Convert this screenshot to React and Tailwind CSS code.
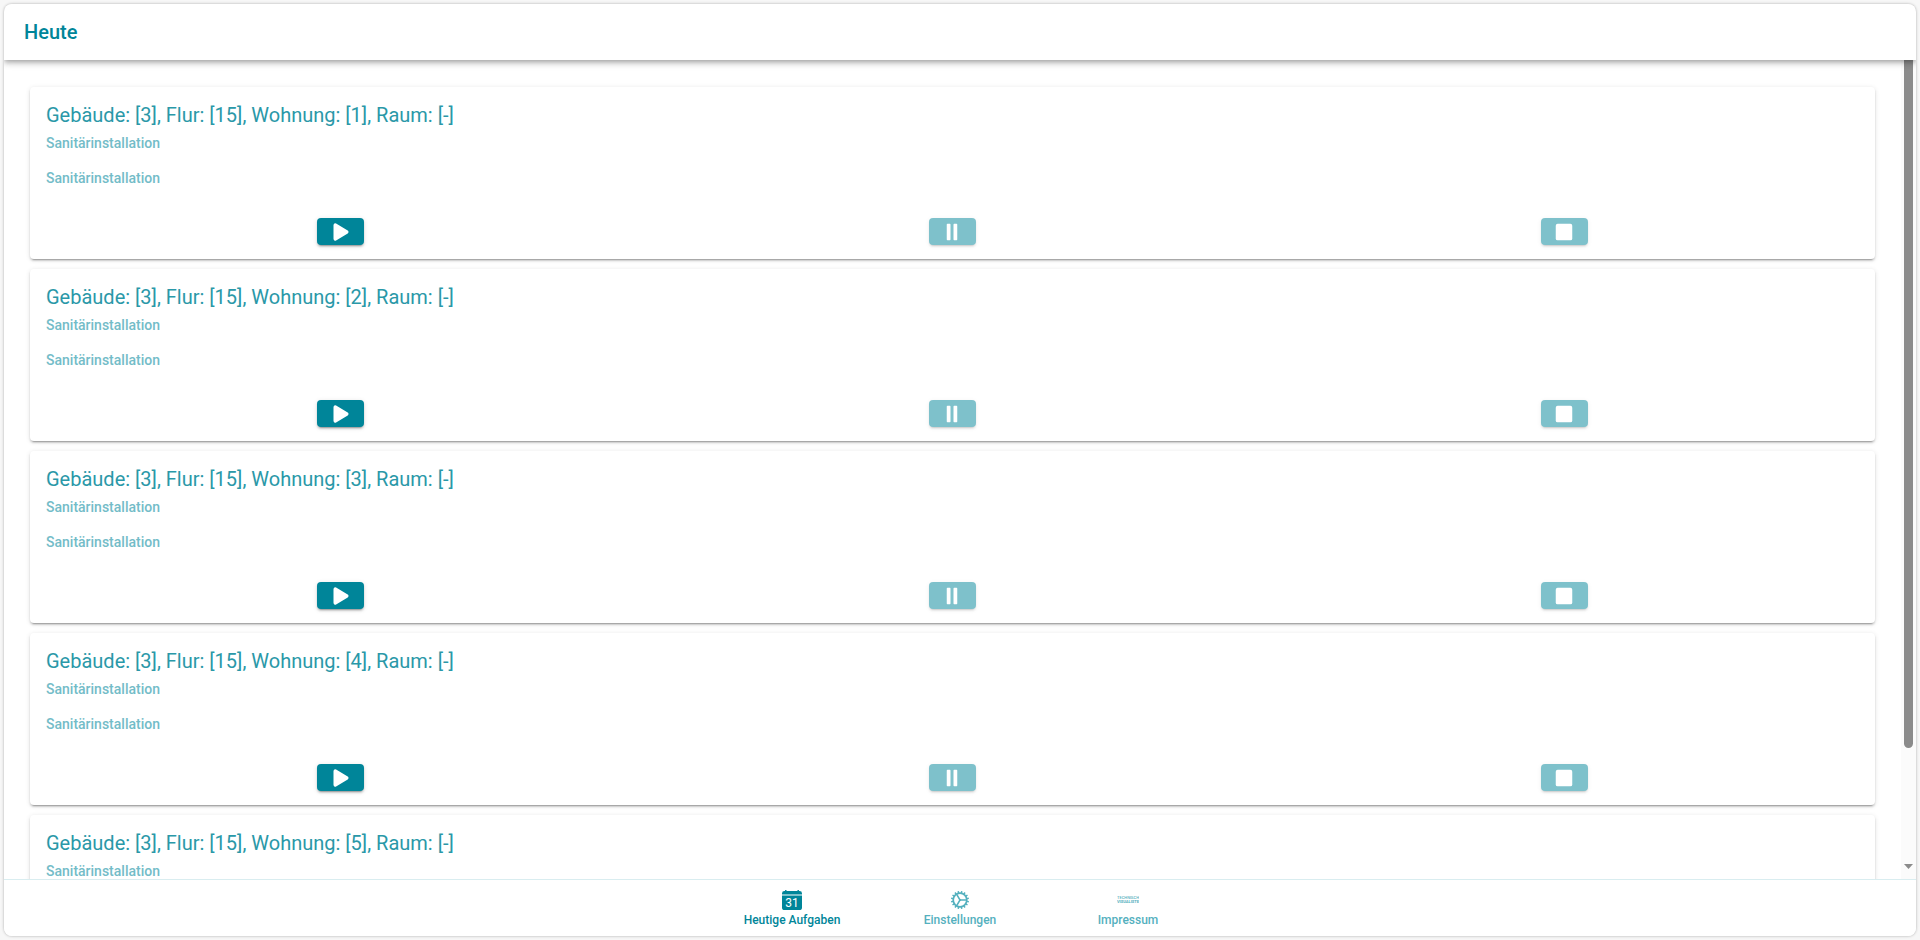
import React from "react";
import { IoPause, IoPlay, IoStop } from "react-icons/io5";

const tasks = [1, 2, 3, 4, 5].map((apartment) => ({
  id: apartment,
  title: `Gebäude: [3], Flur: [15], Wohnung: [${apartment}], Raum: [-]`,
  trade: "Sanitärinstallation",
  description: "Sanitärinstallation",
}));

function ActionButton({ label, icon: Icon, disabled }) {
  return (
    <div className="flex justify-center">
      <button
        type="button"
        aria-label={label}
        disabled={disabled}
        className="flex h-[27px] w-[47px] items-center justify-center rounded bg-[#008599] text-white shadow-[0_3px_1px_-2px_rgba(0,0,0,0.2),0_2px_2px_0_rgba(0,0,0,0.14),0_1px_5px_0_rgba(0,0,0,0.12)] disabled:opacity-50"
      >
        <Icon className="size-6" />
      </button>
    </div>
  );
}

function TaskCard({ task }) {
  return (
    <article className="shrink-0 rounded bg-white shadow-[0_3px_1px_-2px_rgba(0,0,0,0.2),0_2px_2px_0_rgba(0,0,0,0.14),0_1px_5px_0_rgba(0,0,0,0.12)]">
      <div className="px-4 pt-4">
        <h2 className="text-xl leading-6 text-[#2a98a8]">{task.title}</h2>
        <h3 className="mt-2 text-sm leading-[17px] font-medium text-[#73bcc8]">{task.trade}</h3>
        <p className="mt-4 text-sm leading-5 font-medium text-[#73bcc8]">{task.description}</p>
      </div>
      <div className="mt-[30px] grid grid-cols-3 px-[5px] pb-3.5">
        <ActionButton label="Start" icon={IoPlay} />
        <ActionButton label="Pause" icon={IoPause} disabled />
        <ActionButton label="Stopp" icon={IoStop} disabled />
      </div>
    </article>
  );
}

function CalendarIcon() {
  return (
    <svg viewBox="0 0 20 20" className="size-5" aria-hidden="true">
      <path
        fill="currentColor"
        d="M0 4.6V3.4A2.4 2.4 0 0 1 2.4 1H3V.4a.4.4 0 0 1 .4-.4h.8a.4.4 0 0 1 .4.4V1h10.8V.4a.4.4 0 0 1 .4-.4h.8a.4.4 0 0 1 .4.4V1h.6A2.4 2.4 0 0 1 20 3.4v1.2z"
      />
      <path fill="currentColor" d="M0 5.6h20v11.8a2.6 2.6 0 0 1-2.6 2.6H2.6A2.6 2.6 0 0 1 0 17.400z" />
      <text x="10" y="16.6" textAnchor="middle" fontSize="12" fontWeight="400" fill="#fff">
        31
      </text>
    </svg>
  );
}

const teeth = Array.from({ length: 16 }, (_, i) => i * 22.5 + 11.25);

function GearIcon() {
  return (
    <svg viewBox="0 0 20 20" className="size-5" fill="none" stroke="currentColor" aria-hidden="true">
      <circle cx="10" cy="10" r="6.8" strokeWidth="1.7" />
      {teeth.map((angle) => (
        <path key={angle} d="M10 3V1" strokeWidth="1.5" transform={`rotate(${angle} 10 10)`} />
      ))}
      <path d="M10 10h6.500M10 10L6.700 4.300M10 10L6.700 15.700" strokeWidth="1.5" />
      <circle cx="10" cy="10" r="1" fill="currentColor" stroke="none" />
    </svg>
  );
}

function ImprintIcon() {
  return (
    <svg viewBox="0 0 22 20" className="h-5 w-[22px]" aria-hidden="true" fill="currentColor">
      <text x="0" y="9" fontSize="4" fontWeight="500">
        TECHNISCHE
      </text>
      <text x="0" y="13" fontSize="4" fontWeight="700">
        VISUALISTEN
      </text>
    </svg>
  );
}

const tabs = [
  { label: "Heutige Aufgaben", icon: <CalendarIcon />, active: true },
  { label: "Einstellungen", icon: <GearIcon /> },
  { label: "Impressum", icon: <ImprintIcon /> },
];

export default function App() {
  return (
    <div className="h-screen bg-[#f7f7f7] p-1 font-[Roboto,sans-serif]">
      <div className="flex h-full flex-col overflow-hidden rounded-lg bg-white shadow-[0_0_3px_rgba(0,0,0,0.3)]">
        <header className="relative z-10 flex h-14 shrink-0 items-center bg-white px-5 shadow-[0_2px_4px_-1px_rgba(0,0,0,0.2),0_4px_5px_0_rgba(0,0,0,0.14),0_1px_10px_0_rgba(0,0,0,0.12)]">
          <h1 className="text-xl font-medium text-[#008599]">Heute</h1>
        </header>

        <div className="flex min-h-0 flex-1">
          <main className="flex min-w-0 flex-1 flex-col gap-2.5 overflow-y-auto px-[26px] py-[27px] [scrollbar-width:none]">
            {tasks.map((task) => (
              <TaskCard key={task.id} task={task} />
            ))}
          </main>
          <div className="flex w-[15px] shrink-0 flex-col items-center justify-between bg-[#fbfbfb] pb-2.5" aria-hidden="true">
            <div className="h-[85%] w-[9px] rounded-b-full bg-[#8b8b8b]" />
            <svg viewBox="0 0 9 5" className="h-[5px] w-[9px]">
              <path d="M0 0h9L4.500 5z" fill="#8b8b8b" />
            </svg>
          </div>
        </div>

        <nav className="flex h-[57px] shrink-0 justify-center border-t border-[#d9edf0] bg-white">
          {tabs.map((tab) => (
            <a
              key={tab.label}
              href="#"
              aria-current={tab.active ? "page" : undefined}
              className={
                tab.active
                  ? "flex w-[168px] flex-col items-center pt-2.5 text-[#008599]"
                  : "flex w-[168px] flex-col items-center pt-2.5 text-[#54b0be]"
              }
            >
              {tab.icon}
              <span className="mt-0.5 text-xs leading-4 font-medium">{tab.label}</span>
            </a>
          ))}
        </nav>
      </div>
    </div>
  );
}
